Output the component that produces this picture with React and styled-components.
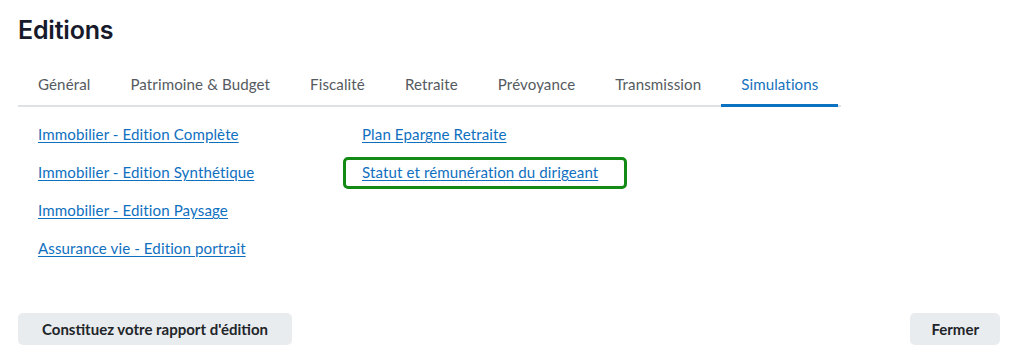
import React from "react";
import styled, { createGlobalStyle } from "styled-components";

const GlobalStyle = createGlobalStyle`
  html, body { margin: 0; padding: 0; background: #fff; }
  body { font-family: "Source Sans Pro", Lato, "Open Sans", sans-serif; }
`;

const Page = styled.div`
  display: flex;
  flex-direction: column;
  min-height: 100vh;
  box-sizing: border-box;
  padding: 14px 17px 12px 18px;
`;

const Title = styled.h1`
  margin: 0;
  font-family: Inter, "Open Sans", sans-serif;
  font-weight: 600;
  font-size: 25px;
  line-height: 32px;
  letter-spacing: -0.2px;
  color: #161a2b;
`;

const TabBar = styled.nav`
  display: flex;
  width: 823px;
  margin-top: 19px;
  border-bottom: 2px solid #dee2e6;
`;

const Tab = styled.div`
  padding: 9px 20px 10px;
  font-family: Lato, sans-serif;
  font-size: 15.1px;
  letter-spacing: 0.1px;
  line-height: 20px;
  color: ${(p) => (p.$active ? "#1672bd" : "#555a60")};
  margin-bottom: -2px;
  border-bottom: 3px solid ${(p) => (p.$active ? "#0a72c0" : "transparent")};
  white-space: nowrap;
`;

const Links = styled.div`
  display: grid;
  grid-template-columns: 324px auto;
  grid-auto-flow: column;
  grid-template-rows: repeat(4, 38px);
  padding: 8px 0 0 20px;
`;

const Cell = styled.div`
  display: flex;
  align-items: center;
  position: relative;
`;

const Link = styled.a`
  font-family: Lato, sans-serif;
  font-size: 15.1px;
  letter-spacing: 0.1px;
  color: #1070c0;
  text-decoration: underline;
  text-underline-offset: 2px;
  cursor: pointer;
`;

const Highlight = styled.span`
  position: absolute;
  left: -19px;
  top: 4px;
  width: 284px;
  height: 32px;
  box-sizing: border-box;
  border: 3.5px solid #138a14;
  border-radius: 5px;
  pointer-events: none;
`;

const Footer = styled.div`
  margin-top: auto;
  display: flex;
  justify-content: space-between;
`;

const Button = styled.button`
  height: 32px;
  padding: 0 ${(p) => p.$pad || 20}px;
  border: none;
  border-radius: 5px;
  background: #e9ecef;
  font-family: Lato, sans-serif;
  font-weight: 700;
  font-size: 15px;
  color: #212529;
`;

const tabs = [
  "Général",
  "Patrimoine & Budget",
  "Fiscalité",
  "Retraite",
  "Prévoyance",
  "Transmission",
  "Simulations",
];

const links = [
  { label: "Immobilier - Edition Complète" },
  { label: "Immobilier - Edition Synthétique" },
  { label: "Immobilier - Edition Paysage" },
  { label: "Assurance vie - Edition portrait" },
  { label: "Plan Epargne Retraite" },
  { label: "Statut et rémunération du dirigeant", marked: true },
];

export default function App() {
  return (
    <>
      <GlobalStyle />
      <Page>
        <Title>Editions</Title>
        <TabBar>
          {tabs.map((t) => (
            <Tab key={t} $active={t === "Simulations"}>
              {t}
            </Tab>
          ))}
        </TabBar>
        <Links>
          {links.map((l) => (
            <Cell key={l.label}>
              {l.marked && <Highlight />}
              <Link>{l.label}</Link>
            </Cell>
          ))}
        </Links>
        <Footer>
          <Button $pad={24}>Constituez votre rapport d'édition</Button>
          <Button $pad={21}>Fermer</Button>
        </Footer>
      </Page>
    </>
  );
}
